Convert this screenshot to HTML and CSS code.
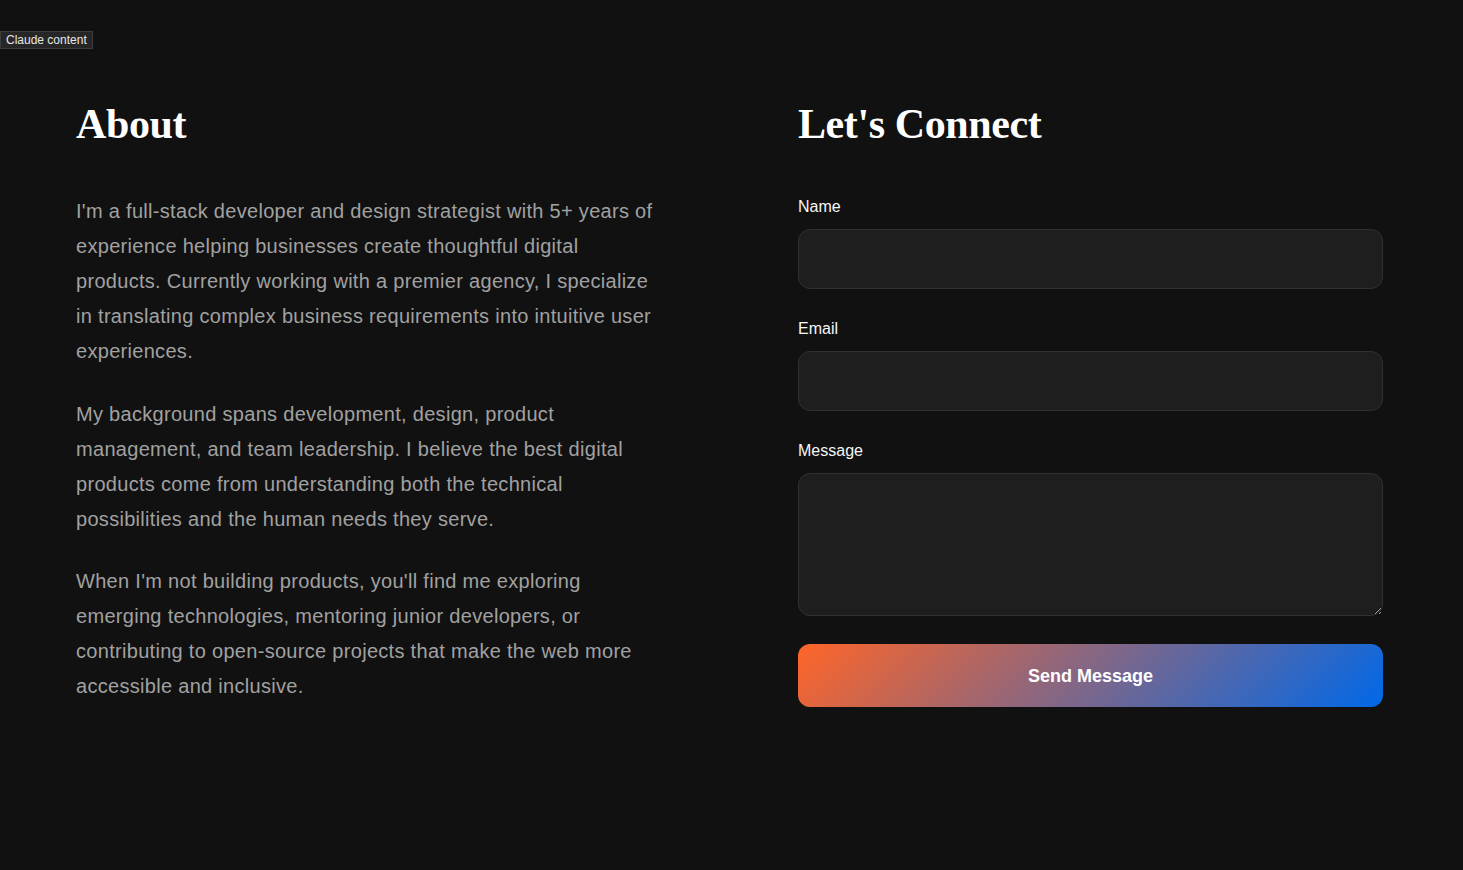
FILE: index.html
```html
<!DOCTYPE html>
<html lang="en">
<head>
<meta charset="utf-8">
<title>About &amp; Contact</title>
<link rel="stylesheet" href="styles.css">
</head>
<body>
<div class="badge">Claude content</div>
<main class="page">
  <section class="about">
    <h2 class="heading">About</h2>
    <p class="copy">I'm a full-stack developer and design strategist with 5+ years of experience helping businesses create thoughtful digital products. Currently working with a premier agency, I specialize in translating complex business requirements into intuitive user experiences.</p>
    <p class="copy">My background spans development, design, product management, and team leadership. I believe the best digital products come from understanding both the technical possibilities and the human needs they serve.</p>
    <p class="copy">When I'm not building products, you'll find me exploring emerging technologies, mentoring junior developers, or contributing to open-source projects that make the web more accessible and inclusive.</p>
  </section>
  <section class="connect">
    <h2 class="heading">Let's Connect</h2>
    <form class="form">
      <div class="field">
        <label class="label" for="name">Name</label>
        <input class="input" id="name" type="text">
      </div>
      <div class="field">
        <label class="label" for="email">Email</label>
        <input class="input" id="email" type="email">
      </div>
      <div class="field field-last">
        <label class="label" for="message">Message</label>
        <textarea class="input textarea" id="message"></textarea>
      </div>
      <button class="send" type="button">Send Message</button>
    </form>
  </section>
</main>
</body>
</html>
```
FILE: styles.css
```css
* { box-sizing: border-box; }

html, body {
  margin: 0;
  padding: 0;
  background: #111111;
}

body {
  font-family: "Liberation Sans", Arial, Helvetica, sans-serif;
  color: #ffffff;
  min-height: 870px;
  position: relative;
}

.badge {
  position: absolute;
  left: 0;
  top: 31px;
  height: 18px;
  padding: 0 5px;
  font-size: 12px;
  line-height: 17px;
  color: #e6e6e6;
  background: #262626;
  border: 1px solid #3c3c3c;
}

.page {
  display: grid;
  grid-template-columns: 585px 585px;
  column-gap: 137px;
  padding: 99px 80px 0 76px;
}

.heading {
  margin: 0 0 45px;
  font-family: "Liberation Serif", "Times New Roman", Times, serif;
  font-weight: 700;
  font-size: 42px;
  line-height: 1.2;
  color: #ffffff;
  letter-spacing: -0.4px;
}

.copy {
  margin: 0 0 27.5px;
  font-size: 20px;
  line-height: 35px;
  letter-spacing: 0.3px;
  color: #a1a1a1;
}

.form {
  display: flex;
  flex-direction: column;
}

.field {
  display: flex;
  flex-direction: column;
  margin-bottom: 27px;
}

.field-last {
  margin-bottom: 28px;
}

.label {
  font-size: 16px;
  line-height: 24px;
  font-weight: 500;
  color: #f7f7f7;
  padding-top: 1px;
  margin-bottom: 10px;
}

.input {
  display: block;
  width: 100%;
  height: 60px;
  margin: 0;
  padding: 16px 18px;
  background: #1e1e1e;
  border: 1px solid #313131;
  border-radius: 12px;
  color: #ffffff;
  font-family: inherit;
  font-size: 16px;
  outline: none;
}

.textarea {
  height: 143px;
  resize: vertical;
}

.send {
  display: block;
  width: 100%;
  height: 63px;
  padding: 2px 0 0;
  border: none;
  border-radius: 12px;
  background: linear-gradient(135deg, #ff6528 0%, #0068e8 100%);
  color: #ffffff;
  font-family: "Liberation Sans", Arial, Helvetica, sans-serif;
  font-weight: 700;
  font-size: 18px;
  line-height: 23px;
  cursor: pointer;
}
```
